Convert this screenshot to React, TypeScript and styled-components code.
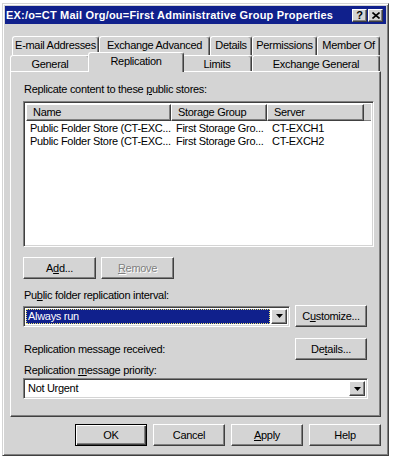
import React from "react";
import styled, { createGlobalStyle, css } from "styled-components";

const FACE = "#d4d4d4";
const NAVY = "#10208c";

const GlobalStyle = createGlobalStyle`
  html, body {
    margin: 0;
    padding: 0;
    background: #fff;
  }
  body {
    font-family: "Liberation Sans", Arial, sans-serif;
    font-size: 11px;
    letter-spacing: -0.3px;
    color: #000;
  }
  * {
    box-sizing: border-box;
  }
`;

const raised = css`
  border: 1px solid;
  border-color: #fff #404040 #404040 #fff;
  box-shadow: inset -1px -1px 0 #808080;
`;

const sunken = css`
  border: 1px solid;
  border-color: #808080 #fff #fff #808080;
  box-shadow: inset 1px 1px 0 #404040, inset -1px -1px 0 ${FACE};
`;

const Window = styled.div`
  width: 387px;
  height: 453px;
  margin: 3px 0 0 2px;
  padding: 2px;
  background: ${FACE};
  border: 1px solid;
  border-color: ${FACE} #404040 #404040 ${FACE};
  box-shadow: inset 1px 1px 0 #fff, inset -1px -1px 0 #808080;
  display: flex;
  flex-direction: column;
`;

const TitleBar = styled.div`
  height: 18px;
  background: ${NAVY};
  display: flex;
  align-items: center;
  padding: 0 3px 0 1px;
`;

const TitleText = styled.div`
  flex: 1;
  color: #fff;
  font-weight: bold;
  font-size: 11px;
  letter-spacing: 0.2px;
  white-space: nowrap;
  overflow: hidden;
`;

const TitleButtons = styled.div`
  display: flex;
  gap: 1px;
`;

const CaptionButton = styled.div`
  ${raised};
  width: 15px;
  height: 13px;
  background: ${FACE};
  display: flex;
  align-items: center;
  justify-content: center;
  font-weight: bold;
  font-size: 11px;
  line-height: 1;
`;

const Body = styled.div`
  display: flex;
  flex-direction: column;
  padding: 12px 0 0 5px;
`;

const TabRow = styled.div<{ $h: number; $indent?: number }>`
  display: flex;
  align-items: flex-end;
  height: ${(p) => p.$h}px;
  padding-left: ${(p) => p.$indent || 0}px;
`;

const Tab = styled.div<{ $w: number; $active?: boolean }>`
  width: ${(p) => p.$w + (p.$active ? 4 : 0)}px;
  height: ${(p) => (p.$active ? 20 : 16)}px;
  margin: ${(p) => (p.$active ? "0 -2px -1px" : "0")};
  position: relative;
  z-index: ${(p) => (p.$active ? 2 : 0)};
  background: ${FACE};
  border-top: 1px solid #fff;
  border-left: 1px solid #fff;
  border-right: 1px solid #404040;
  border-radius: 3px 3px 0 0;
  box-shadow: inset -1px 0 0 #808080;
  display: flex;
  align-items: ${(p) => (p.$active ? "flex-start" : "center")};
  padding-top: ${(p) => (p.$active ? 2 : 0)}px;
  justify-content: center;
  white-space: nowrap;
`;

const BackTab = styled(Tab)`
  height: 19px;
  align-items: flex-start;
  padding-top: 2px;
`;

const Panel = styled.div`
  width: 371px;
  height: 346px;
  background: ${FACE};
  border: 1px solid;
  border-color: #fff #404040 #404040 #fff;
  box-shadow: inset -1px -1px 0 #808080;
  padding: 11px 0 0 12px;
  display: flex;
  flex-direction: column;
`;

const Label = styled.div<{ $mt?: number }>`
  height: 13px;
  line-height: 13px;
  margin-top: ${(p) => p.$mt || 0}px;
  padding-left: 1px;
  white-space: nowrap;
`;

const U = styled.span`
  text-decoration: underline;
  text-underline-offset: 1px;
`;

const ListView = styled.div`
  ${sunken};
  width: 351px;
  height: 146px;
  margin-top: 5px;
  background: #fff;
  padding: 2px;
  display: flex;
  flex-direction: column;
`;

const HeaderRow = styled.div`
  display: flex;
  height: 17px;
  background: ${FACE};
`;

const HeaderCell = styled.div<{ $w?: number }>`
  ${raised};
  width: ${(p) => (p.$w ? `${p.$w}px` : "auto")};
  flex: ${(p) => (p.$w ? "none" : 1)};
  padding-left: 6px;
  line-height: 14px;
  white-space: nowrap;
  overflow: hidden;
`;

const FillerCell = styled.div`
  flex: 1;
  border-bottom: 1px solid #808080;
`;

const Rows = styled.div`
  padding-top: 1px;
`;

const Row = styled.div`
  display: flex;
  height: 13px;
  line-height: 13px;
`;

const Cell = styled.div<{ $w: number; $pl: number }>`
  width: ${(p) => p.$w}px;
  padding-left: ${(p) => p.$pl}px;
  white-space: nowrap;
`;

const ButtonRow = styled.div<{ $mt?: number; $gap?: number }>`
  display: flex;
  align-items: center;
  gap: ${(p) => p.$gap ?? 5}px;
  margin-top: ${(p) => p.$mt || 0}px;
`;

const Button = styled.div<{ $w?: number; $disabled?: boolean; $default?: boolean }>`
  width: ${(p) => p.$w || 73}px;
  height: 22px;
  flex: none;
  background: ${FACE};
  display: flex;
  align-items: center;
  justify-content: center;
  white-space: nowrap;
  ${(p) =>
    p.$default
      ? css`
          border: 1px solid #000;
          box-shadow: inset 1px 1px 0 #fff, inset -1px -1px 0 #404040,
            inset -2px -2px 0 #808080;
        `
      : raised};
  ${(p) =>
    p.$disabled &&
    css`
      color: #808080;
      text-shadow: 1px 1px 0 #fff;
    `}
`;

const Combo = styled.div<{ $w: number }>`
  ${sunken};
  width: ${(p) => p.$w}px;
  height: 21px;
  background: #fff;
  padding: 2px;
  display: flex;
  align-items: stretch;
  flex: none;
`;

const ComboValue = styled.div<{ $selected?: boolean }>`
  flex: 1;
  margin-right: 1px;
  padding-left: 2px;
  line-height: 15px;
  white-space: nowrap;
  ${(p) =>
    p.$selected &&
    css`
      background: ${NAVY};
      color: #fff;
      outline: 1px dotted #e8e070;
      outline-offset: -1px;
    `}
`;

const DropButton = styled.div`
  ${raised};
  width: 16px;
  background: ${FACE};
  display: flex;
  align-items: center;
  justify-content: center;
`;

const Spacer = styled.div`
  flex: 1;
`;

const BottomBar = styled.div`
  width: 371px;
  display: flex;
  justify-content: flex-end;
  gap: 6px;
  margin-top: 7px;
`;

const Arrow = () => (
  <svg width="7" height="4" viewBox="0 0 7 4">
    <polygon points="0,0 7,0 3.5,4" fill="#000" />
  </svg>
);

const CloseGlyph = () => (
  <svg width="8" height="7" viewBox="0 0 8 7">
    <path d="M0.5 0.5 L7.5 6.5 M7.5 0.5 L0.5 6.5" stroke="#000" strokeWidth="1.6" />
  </svg>
);

const stores = [
  ["Public Folder Store (CT-EXC...", "First Storage Gro...", "CT-EXCH1"],
  ["Public Folder Store (CT-EXC...", "First Storage Gro...", "CT-EXCH2"],
];

export default function App() {
  return (
    <>
      <GlobalStyle />
      <Window>
        <TitleBar>
          <TitleText>EX:/o=CT Mail Org/ou=First Administrative Group Properties</TitleText>
          <TitleButtons>
            <CaptionButton>?</CaptionButton>
            <CaptionButton>
              <CloseGlyph />
            </CaptionButton>
          </TitleButtons>
        </TitleBar>
        <Body>
          <TabRow $h={19} $indent={2}>
            <BackTab $w={87}>E-mail Addresses</BackTab>
            <BackTab $w={111}>Exchange Advanced</BackTab>
            <BackTab $w={42}>Details</BackTab>
            <BackTab $w={65}>Permissions</BackTab>
            <BackTab $w={63}>Member Of</BackTab>
          </TabRow>
          <TabRow $h={16}>
            <Tab $w={80}>General</Tab>
            <Tab $w={92} $active>
              Replication
            </Tab>
            <Tab $w={70}>Limits</Tab>
            <Tab $w={128}>Exchange General</Tab>
          </TabRow>
          <Panel>
            <Label>
              Replicate content to these <U>p</U>ublic stores:
            </Label>
            <ListView>
              <HeaderRow>
                <HeaderCell $w={145}>Name</HeaderCell>
                <HeaderCell $w={96}>Storage Group</HeaderCell>
                <HeaderCell $w={97}>Server</HeaderCell>
                <FillerCell />
              </HeaderRow>
              <Rows>
                {stores.map((s, i) => (
                  <Row key={i}>
                    <Cell $w={145} $pl={4}>
                      {s[0]}
                    </Cell>
                    <Cell $w={96} $pl={5}>
                      {s[1]}
                    </Cell>
                    <Cell $w={97} $pl={5}>
                      {s[2]}
                    </Cell>
                  </Row>
                ))}
              </Rows>
            </ListView>
            <ButtonRow $mt={10}>
              <Button>
                A<U>d</U>d...
              </Button>
              <Button $disabled>
                <U>R</U>emove
              </Button>
            </ButtonRow>
            <Label $mt={10}>
              Pu<U>b</U>lic folder replication interval:
            </Label>
            <ButtonRow $mt={3}>
              <Combo $w={267}>
                <ComboValue $selected>Always run</ComboValue>
                <DropButton>
                  <Arrow />
                </DropButton>
              </Combo>
              <Button $w={72}>
                C<U>u</U>stomize...
              </Button>
            </ButtonRow>
            <ButtonRow $mt={11} $gap={0}>
              <Label>Replication message received:</Label>
              <Spacer />
              <Button $w={72} style={{ marginRight: 13 }}>
                De<U>t</U>ails...
              </Button>
            </ButtonRow>
            <Label $mt={4}>
              Replication <U>m</U>essage priority:
            </Label>
            <ButtonRow $mt={1}>
              <Combo $w={345}>
                <ComboValue>Not Urgent</ComboValue>
                <DropButton>
                  <Arrow />
                </DropButton>
              </Combo>
            </ButtonRow>
          </Panel>
          <BottomBar>
            <Button $w={72} $default>
              OK
            </Button>
            <Button $w={72}>Cancel</Button>
            <Button $w={72}>
              <U>A</U>pply
            </Button>
            <Button $w={72}>Help</Button>
          </BottomBar>
        </Body>
      </Window>
    </>
  );
}
